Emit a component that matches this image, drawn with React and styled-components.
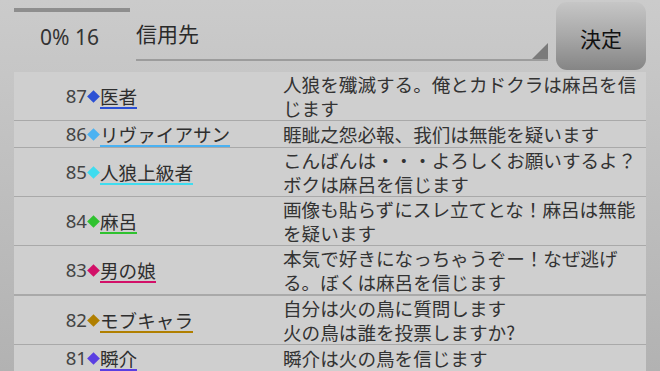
import React from "react";
import styled, { createGlobalStyle } from "styled-components";

const GlobalStyle = createGlobalStyle`
  html, body {
    margin: 0;
    padding: 0;
  }
  body {
    width: 660px;
    height: 371px;
    overflow: hidden;
    background: linear-gradient(to bottom, #cbcbcb 0%, #bcbcbc 60%, #b2b2b2 100%);
    font-family: "Noto Sans CJK JP", "Noto Sans", sans-serif;
  }
`;

const Page = styled.div`
  display: flex;
  flex-direction: column;
  height: 371px;
`;

const Header = styled.div`
  display: flex;
  align-items: stretch;
  height: 72px;
  padding: 0 14px;
`;

const Progress = styled.div`
  width: 122px;
  display: flex;
  flex-direction: column;
`;

const ProgressBar = styled.div`
  width: 116px;
  height: 4px;
  margin-top: 8px;
  background: #8e8e8e;
`;

const ProgressText = styled.div`
  margin-top: 11px;
  padding-left: 26px;
  font-family: "Noto Sans", sans-serif;
  font-size: 21px;
  color: #333;
`;

const Select = styled.div`
  position: relative;
  width: 412px;
  height: 61px;
  border-bottom: 2px solid #9c9c9c;
  box-sizing: border-box;
  padding-top: 18px;
  font-size: 21px;
  color: #2a2a2a;
  &::after {
    content: "";
    position: absolute;
    right: 0;
    bottom: 0;
    border-style: solid;
    border-width: 0 0 16px 16px;
    border-color: transparent transparent #7a7a7a transparent;
  }
`;

const Button = styled.button`
  margin: 2px 0 2px 8px;
  width: 90px;
  border: none;
  border-radius: 11px;
  background: linear-gradient(to bottom, #c6c6c6 0%, #a8a8a8 50%, #858585 100%);
  font-family: "Noto Sans CJK JP", sans-serif;
  font-size: 21px;
  color: #111;
  padding: 4px 0 0 0;
`;

const List = styled.div`
  margin: 0 14px;
  background: #cfcfcf;
  flex: 1;
  overflow: hidden;
`;

const Row = styled.div`
  display: flex;
  align-items: center;
  border-bottom: ${(p) => (p.$thick ? 2 : 1)}px solid #a9a9a9;
  min-height: 25px;
`;

const Who = styled.div`
  width: 269px;
  display: flex;
  align-items: center;
  flex-shrink: 0;
`;

const Num = styled.span`
  width: 73px;
  text-align: right;
  font-family: "Noto Sans", sans-serif;
  font-size: 18.6px;
  color: #444;
  line-height: 24px;
`;

const Diamond = styled.span`
  width: 9px;
  height: 9px;
  margin: 0 2px 0 2px;
  background: ${(p) => p.$color};
  transform: rotate(45deg);
`;

const Name = styled.span`
  font-size: 18.6px;
  line-height: 22px;
  color: #2e2e2e;
  border-bottom: 2px solid ${(p) => p.$color};
  margin-top: 2px;
`;

const Message = styled.div`
  width: 360px;
  font-size: 18.6px;
  line-height: 24px;
  color: #333;
  white-space: pre-wrap;
`;

const rows = [
  { no: 87, name: "医者", color: "#2b50d4", text: "人狼を殲滅する。俺とカドクラは麻呂を信じます" },
  { no: 86, name: "リヴァイアサン", color: "#4bb2f2", text: "睚眦之怨必報、我们は無能を疑います" },
  { no: 85, name: "人狼上級者", color: "#3fdcef", text: "こんばんは・・・よろしくお願いするよ？ボクは麻呂を信じます" },
  { no: 84, name: "麻呂", color: "#2fc22f", text: "画像も貼らずにスレ立てとな！麻呂は無能を疑います" },
  { no: 83, name: "男の娘", color: "#d21068", text: "本気で好きになっちゃうぞー！なぜ逃げる。ぼくは麻呂を信じます", thick: true },
  { no: 82, name: "モブキャラ", color: "#b07f00", text: "自分は火の鳥に質問します\n火の鳥は誰を投票しますか?" },
  { no: 81, name: "瞬介", color: "#5a3fe2", text: "瞬介は火の鳥を信じます" },
];

export default function App() {
  return (
    <Page>
      <GlobalStyle />
      <Header>
        <Progress>
          <ProgressBar />
          <ProgressText>0% 16</ProgressText>
        </Progress>
        <Select>信用先</Select>
        <Button>決定</Button>
      </Header>
      <List>
        {rows.map((r) => (
          <Row key={r.no} $thick={r.thick}>
            <Who>
              <Num>{r.no}</Num>
              <Diamond $color={r.color} />
              <Name $color={r.color}>{r.name}</Name>
            </Who>
            <Message>{r.text}</Message>
          </Row>
        ))}
      </List>
    </Page>
  );
}
